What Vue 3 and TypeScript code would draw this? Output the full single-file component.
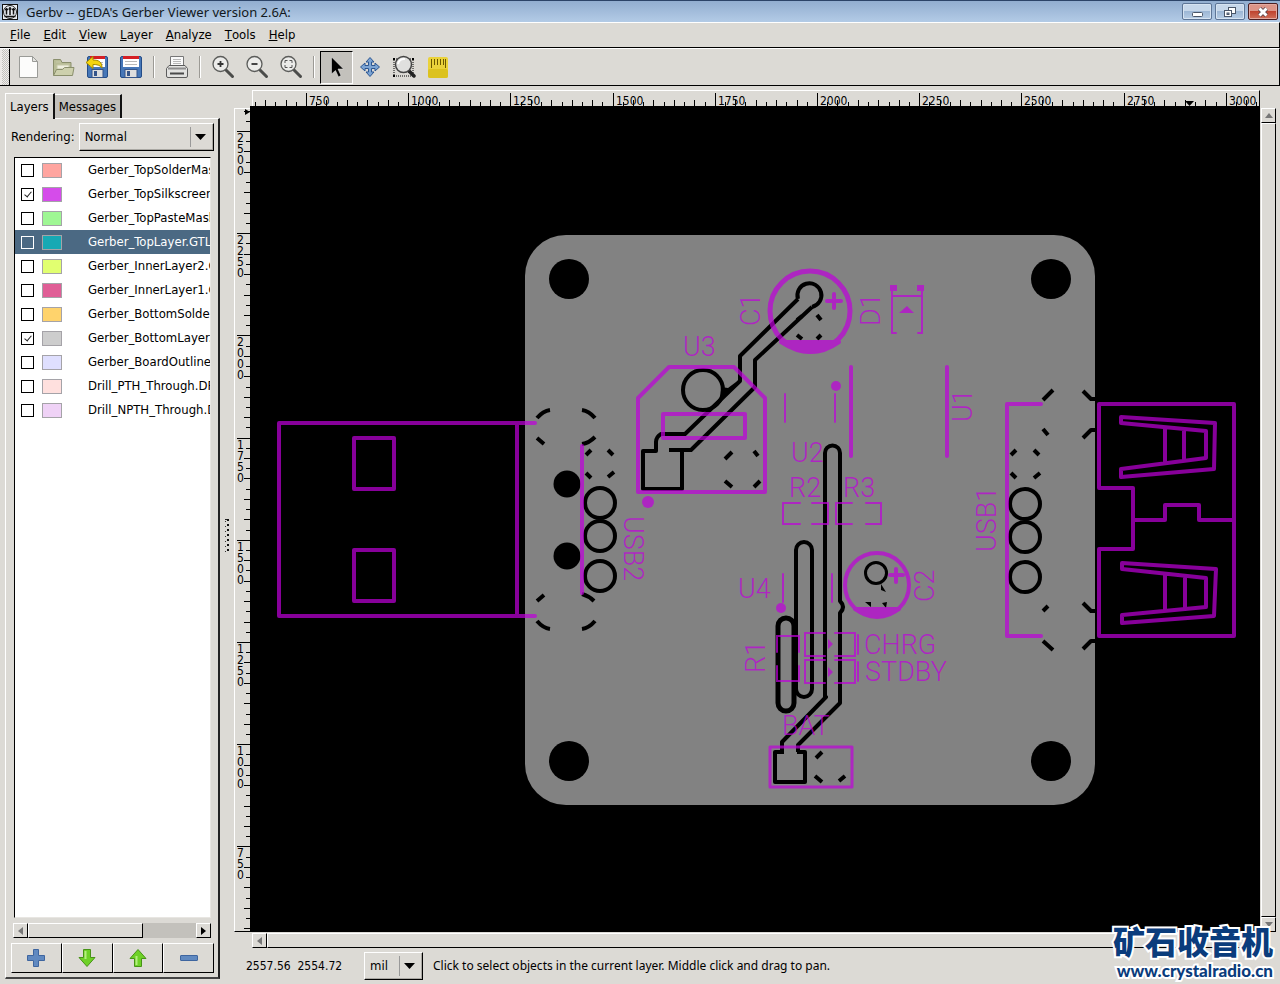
<script setup lang="ts">
import { reactive, ref } from 'vue'

interface Layer {
  name: string
  color: string
  visible: boolean
}

interface Tick {
  pos: number
  size: number
  label: string
}

interface SilkLabel {
  text: string
  x: number
  y: number
  angle: number
}

const menus = ['File', 'Edit', 'View', 'Layer', 'Analyze', 'Tools', 'Help']

const layers = reactive<Layer[]>([
  { name: 'Gerber_TopSolderMaskLayer.GTS', color: '#ffa5a0', visible: false },
  { name: 'Gerber_TopSilkscreenLayer.GTO', color: '#d54cea', visible: true },
  { name: 'Gerber_TopPasteMaskLayer.GTP', color: '#9ff794', visible: false },
  { name: 'Gerber_TopLayer.GTL', color: '#17a9b4', visible: false },
  { name: 'Gerber_InnerLayer2.G2', color: '#e1ff70', visible: false },
  { name: 'Gerber_InnerLayer1.G1', color: '#e05e96', visible: false },
  { name: 'Gerber_BottomSolderMaskLayer.GBS', color: '#ffd36c', visible: false },
  { name: 'Gerber_BottomLayer.GBL', color: '#cdcdcd', visible: true },
  { name: 'Gerber_BoardOutlineLayer.GKO', color: '#dfdffe', visible: false },
  { name: 'Drill_PTH_Through.DRL', color: '#ffe0de', visible: false },
  { name: 'Drill_NPTH_Through.DRL', color: '#efd2f6', visible: false },
])
const selected = ref(3)
const rendering = ref('Normal')
const unit = ref('mil')

const PX_PER_MIL = 0.4088

function buildTicks(from: number, to: number, toPos: (v: number) => number): Tick[] {
  const ticks: Tick[] = []
  for (let v = from; v <= to; v += 25) {
    const major = v % 250 === 0
    ticks.push({
      pos: Math.round(toPos(v)),
      size: major ? 13 : v % 50 === 0 ? 6 : 4,
      label: major ? String(v) : '',
    })
  }
  return ticks
}

// Positions are relative to the rulers' own origins.
const hTicks = buildTicks(625, 3075, (v) => 53 + (v - 750) * PX_PER_MIL)
const vTicks = buildTicks(550, 2550, (v) => 22 + (2500 - v) * PX_PER_MIL)

const silkLabels: SilkLabel[] = [
  { text: 'U3', x: 683, y: 356, angle: 0 },
  { text: 'U2', x: 791, y: 462, angle: 0 },
  { text: 'R2', x: 789, y: 497, angle: 0 },
  { text: 'R3', x: 843, y: 497, angle: 0 },
  { text: 'U4', x: 738, y: 598, angle: 0 },
  { text: 'CHRG', x: 864, y: 654, angle: 0 },
  { text: 'STDBY', x: 865, y: 681, angle: 0 },
  { text: 'BAT', x: 782, y: 735, angle: 0 },
  { text: 'C1', x: 760, y: 326, angle: -90 },
  { text: 'D1', x: 880, y: 326, angle: -90 },
  { text: 'U1', x: 972, y: 422, angle: -90 },
  { text: 'C2', x: 934, y: 602, angle: -90 },
  { text: 'R1', x: 765, y: 673, angle: -90 },
  { text: 'USB1', x: 996, y: 552, angle: -90 },
  { text: 'USB2', x: 624, y: 516, angle: 90 },
]
</script>

<template>
  <div class="window">
    <header class="titlebar">
      <svg class="app-icon" width="16" height="16" viewBox="0 0 16 16">
        <rect x="0.5" y="0.5" width="15" height="15" fill="#e9edf2" stroke="#111" />
        <circle cx="8" cy="8" r="6.5" fill="none" stroke="#222" />
        <path d="M4.5 4v6.5M8 3v8M11.5 4v6.5M3 5.5h3M6.5 5h3M10 5.5h3M2.500 12.500h11" stroke="#111" stroke-width="1.500" fill="none" />
      </svg>
      <h1>Gerbv -- gEDA's Gerber Viewer version 2.6A:</h1>
      <div class="win-buttons">
        <button class="wb" aria-label="Minimize">
          <svg width="28" height="14" viewBox="0 0 28 14"><rect x="9.500" y="7.500" width="10" height="4" rx="1" fill="#fff" stroke="#4a5668" /></svg>
        </button>
        <button class="wb" aria-label="Restore">
          <svg width="28" height="14" viewBox="0 0 28 14">
            <rect x="12.500" y="2.500" width="7" height="6" fill="#fff" stroke="#4a5668" />
            <rect x="8.500" y="5.500" width="7" height="6" fill="#fff" stroke="#4a5668" />
            <rect x="11" y="8" width="2" height="1.500" fill="#9db5d2" stroke="#4a5668" />
          </svg>
        </button>
        <button class="wb close" aria-label="Close">
          <svg width="28" height="14" viewBox="0 0 28 14">
            <path d="M10.500 3.500l7 7M17.500 3.500l-7 7" stroke="#53424a" stroke-width="4.500" />
            <path d="M10.500 3.500l7 7M17.500 3.500l-7 7" stroke="#fff" stroke-width="3" />
          </svg>
        </button>
      </div>
    </header>

    <nav class="menubar">
      <button v-for="m in menus" :key="m"><u>{{ m[0] }}</u>{{ m.slice(1) }}</button>
    </nav>

    <div class="toolbar">
      <div class="grip"></div>
      <button aria-label="New">
        <svg width="24" height="24" viewBox="0 0 24 24">
          <path d="M2.500 1.500h13l5 5v16h-18z" fill="#fcfcfb" stroke="#9a9b97" stroke-linejoin="round" />
          <path d="M15.500 1.500v5h5z" fill="#e4e4e1" stroke="#9a9b97" stroke-linejoin="round" />
        </svg>
      </button>
      <button aria-label="Open">
        <svg width="24" height="24" viewBox="0 0 24 24">
          <path d="M2.500 20.500V4.500h7l1.500 3h9v5" fill="#b9bd96" stroke="#8a8f6c" />
          <path d="M5 7h5M6 10h12v4H6z" fill="#eeeedd" stroke="#c5c8a8" />
          <path d="M2.500 20.500l3-6h6l2-2h9.500l-1.500 8z" fill="#cdd0ad" stroke="#8a8f6c" stroke-linejoin="round" />
        </svg>
      </button>
      <button aria-label="Revert">
        <svg width="24" height="24" viewBox="0 0 24 24">
          <rect x="2.500" y="1.500" width="20" height="21" rx="1.500" fill="#4677b8" stroke="#244c87" />
          <rect x="5" y="1" width="15" height="11" fill="#fff" /><rect x="5" y="1" width="15" height="3" fill="#d51f24" />
          <path d="M12 7.500h6M12 9.500h6" stroke="#b9b9b9" />
          <rect x="7" y="14.500" width="11" height="8" fill="#dedede" stroke="#35558a" /><rect x="9" y="16" width="3" height="5" fill="#35558a" />
          <path d="M1 7.500L8 1.500v3.500c6 0 9 2 9 8-2-3-5-3.500-9-3.500v4z" fill="#f5d50f" stroke="#a58a00" stroke-linejoin="round" />
        </svg>
      </button>
      <button aria-label="Save">
        <svg width="24" height="24" viewBox="0 0 24 24">
          <rect x="1.500" y="1.500" width="21" height="21" rx="1.500" fill="#4677b8" stroke="#244c87" />
          <rect x="4" y="1" width="16" height="11" fill="#fff" /><rect x="4" y="1" width="16" height="3" fill="#d51f24" />
          <path d="M6 6.500h12M6 9.500h12" stroke="#b9b9b9" />
          <rect x="6" y="14.500" width="12" height="8" fill="#dedede" stroke="#35558a" /><rect x="8" y="16" width="3" height="5" fill="#35558a" />
        </svg>
      </button>
      <i class="sep"></i>
      <button aria-label="Print">
        <svg width="24" height="24" viewBox="0 0 24 24">
          <path d="M5.500 11.500v-10h13v10" fill="#fafafa" stroke="#777" />
          <path d="M8 4.500h8M8 6.500h8M8 8.500h8" stroke="#b8b8b8" />
          <path d="M4 10.500h16l2.500 3v7.500q0 1.500-1.500 1.500H3q-1.500 0-1.500-1.500v-7.500z" fill="#e2e2e0" stroke="#5c5c5c" />
          <path d="M3 13.500h18" stroke="#8f8f8f" stroke-width="2" /><path d="M5 18.500h14" stroke="#4a4a4a" stroke-width="2" />
        </svg>
      </button>
      <i class="sep"></i>
      <button aria-label="Zoom in">
        <svg width="24" height="24" viewBox="0 0 24 24">
          <path d="M14.500 14.500l7 7" stroke="#4b4c4a" stroke-width="3" stroke-linecap="round" />
          <circle cx="9.500" cy="9" r="7.500" fill="#ececea" stroke="#5b5c5a" stroke-width="1.300" />
          <path d="M9.500 6v6M6.500 9h6" stroke="#333" stroke-width="1.800" />
        </svg>
      </button>
      <button aria-label="Zoom out">
        <svg width="24" height="24" viewBox="0 0 24 24">
          <path d="M14.500 14.500l7 7" stroke="#4b4c4a" stroke-width="3" stroke-linecap="round" />
          <circle cx="9.500" cy="9" r="7.500" fill="#ececea" stroke="#5b5c5a" stroke-width="1.300" />
          <path d="M6.500 9h6" stroke="#333" stroke-width="1.800" />
        </svg>
      </button>
      <button aria-label="Fit to window">
        <svg width="24" height="24" viewBox="0 0 24 24">
          <path d="M14.500 14.500l7 7" stroke="#4b4c4a" stroke-width="3" stroke-linecap="round" />
          <circle cx="9.500" cy="9" r="7.500" fill="#ececea" stroke="#5b5c5a" stroke-width="1.300" />
          <path d="M6 8V5.500h2.500M10.500 5.500H13V8M13 10v2.500h-2.500M8.500 12.500H6V10" fill="none" stroke="#555" />
        </svg>
      </button>
      <i class="sep"></i>
      <button class="active" aria-label="Pointer">
        <svg width="24" height="24" viewBox="0 0 24 24"><path d="M6.500 2v17l4-3.500 3 6.500 2.500-1.500-3-6.500h5.500z" fill="#000" stroke="#eee" stroke-width="0.500" /></svg>
      </button>
      <button aria-label="Pan">
        <svg width="24" height="24" viewBox="0 0 24 24">
          <path d="M12 2.500l4 4.500h-2.500v3.500H17V8l4.500 4-4.500 4v-2.500h-3.500V17H16l-4 4.500L8 17h2.500v-3.500H7V16l-4.500-4L7 8v2.500h3.500V7H8z" fill="#7ba4d4" stroke="#2b5591" stroke-linejoin="round" />
        </svg>
      </button>
      <button aria-label="Zoom">
        <svg width="24" height="24" viewBox="0 0 24 24">
          <rect x="2" y="4" width="19" height="17" fill="none" stroke="#000" stroke-dasharray="1 1" />
          <path d="M1 3h2v2H1zM20 3h2v2h-2zM1 20h2v2H1z" />
          <path d="M17 16l5 5" stroke="#222" stroke-width="3.500" stroke-linecap="round" />
          <circle cx="11.500" cy="9.500" r="8" fill="#e0e0de" stroke="#444" stroke-width="1.500" />
          <path d="M6 9a6 6 0 0 1 7-5" fill="none" stroke="#fff" stroke-width="2" />
        </svg>
      </button>
      <button aria-label="Measure">
        <svg width="24" height="24" viewBox="0 0 24 24">
          <rect x="2" y="2" width="20" height="21" rx="2" fill="#ead23a" /><rect x="2" y="14" width="20" height="9" rx="2" fill="#dcc21e" />
          <path d="M5.500 4v9M8.500 4v6M11.500 4v6M14.500 4v6M17.500 4v6M19.500 4v9" stroke="#6b5800" />
        </svg>
      </button>
    </div>

    <main class="main">
      <aside class="side">
        <div class="tabs">
          <button class="tab on">Layers</button>
          <button class="tab">Messages</button>
        </div>
        <div class="page">
          <div class="render-row">
            <label for="rendering">Rendering:</label>
            <div class="combo grow">
              <select id="rendering" v-model="rendering">
                <option>Normal</option>
                <option>Fast</option>
              </select>
              <svg width="11" height="6" viewBox="0 0 11 6"><path d="M0 0h11L5.500 6z" /></svg>
            </div>
          </div>
          <ul class="layers">
            <li v-for="(l, i) in layers" :key="l.name" :class="{ sel: i === selected }" @click="selected = i">
              <input :id="`layer-${i}`" v-model="l.visible" type="checkbox" />
              <span class="swatch" :style="{ background: l.color }"></span>
              <label :for="`layer-${i}`">{{ l.name }}</label>
            </li>
          </ul>
          <div class="hscroll list-scroll">
            <button aria-label="Scroll left"><svg width="5" height="8" viewBox="0 0 5 8"><path d="M5 0v8L0 4z" fill="#777" /></svg></button>
            <div class="thumb part"></div>
            <span class="rest"></span>
            <button aria-label="Scroll right"><svg width="5" height="8" viewBox="0 0 5 8"><path d="M0 0v8l5-4z" /></svg></button>
          </div>
          <div class="layer-buttons">
            <button aria-label="Add layer">
              <svg width="20" height="20" viewBox="0 0 20 20"><path d="M7.500 1.500h5v6h6v5h-6v6h-5v-6h-6v-5h6z" fill="#6089c0" stroke="#3e659f" /></svg>
            </button>
            <button aria-label="Move layer down">
              <svg width="20" height="20" viewBox="0 0 20 20"><path d="M6.500 1.500h7v8h4.500l-8 9-8-9h4.500z" fill="#6ed127" stroke="#479316" stroke-linejoin="round" /><path d="M8.500 3v8" stroke="#b4ef7e" stroke-width="2" /></svg>
            </button>
            <button aria-label="Move layer up">
              <svg width="20" height="20" viewBox="0 0 20 20"><path d="M6.500 18.500h7v-8h4.500l-8-9-8 9h4.500z" fill="#6ed127" stroke="#479316" stroke-linejoin="round" /><path d="M8.500 17v-9" stroke="#b4ef7e" stroke-width="2" /></svg>
            </button>
            <button aria-label="Remove layer">
              <svg width="20" height="20" viewBox="0 0 20 20"><rect x="1.500" y="7.500" width="17" height="5" rx="0.500" fill="#6089c0" stroke="#3e659f" /></svg>
            </button>
          </div>
        </div>
      </aside>

      <div class="splitter"><i></i></div>

      <section class="work">
        <svg class="hruler">
          <g shape-rendering="crispEdges">
            <rect v-for="t in hTicks" :key="t.pos" :x="t.pos" :y="15 - t.size" width="1" :height="t.size" />
          </g>
          <text v-for="t in hTicks.filter((k) => k.label)" :key="t.label" :x="t.pos + 3" y="14">{{ t.label }}</text>
          <path d="M932 10h9l-4.500 5z" />
        </svg>
        <svg class="vruler">
          <g shape-rendering="crispEdges">
            <rect v-for="t in vTicks" :key="t.pos" :x="15 - t.size" :y="t.pos" :width="t.size" height="1" />
          </g>
          <template v-for="t in vTicks.filter((k) => k.label)" :key="t.label">
            <text v-for="(d, i) in t.label.split('')" :key="i" x="2" :y="t.pos + 11 + i * 11">{{ d }}</text>
          </template>
          <path d="M10 0v6l5-3z" />
        </svg>

        <div class="canvas">
          <svg width="100%" height="100%">
            <g transform="translate(-250 -106)">
              <rect x="525" y="235" width="570" height="570" rx="41" fill="#828282" />

              <g>
                <circle cx="569" cy="279" r="20" /><circle cx="1051" cy="279" r="20" />
                <circle cx="569" cy="761" r="20" /><circle cx="1051" cy="761" r="20" />
                <circle cx="567" cy="484" r="13.500" /><circle cx="567" cy="556" r="13.500" />
                <path d="M721 387l7 1 8-6-16 20zM881 584l5 8-5-2zM865 602h6v5zM882 603l5-1-1 6z" />
              </g>

              <g fill="none" stroke="#000" stroke-width="4" stroke-linejoin="round">
                <path d="M798 299L740 356v25L685 434h-24q-5 3-5 8v9h-13v38h39v-38" />
                <path d="M669 450h22L755 387v-27L812 307" />
                <path d="M798 299A12 12 0 1 1 812 307" />
                <circle cx="703" cy="390" r="20" />
                <path d="M784 752h-9v30h30v-30h-8M782 752v-10L826 697h-1V453a7.500 7.500 0 0 1 15 0v148q6 6 0 12v90L798 745v7" />
                <rect x="796" y="542" width="16" height="155" rx="8" />
                <rect x="778" y="618" width="16" height="93" rx="8" stroke-width="5" />
                <circle cx="876" cy="573" r="10.500" stroke-width="3" />
                <g>
                  <circle v-for="y in [503, 536, 576]" :key="y" cx="600" :cy="y" r="15" />
                  <circle v-for="y in [504, 537, 577]" :key="y" cx="1025" :cy="y" r="15" />
                  <path d="M797 320l5-4M817 315l4 5M797 335l5 4M821 335l-4 4" />
                  <path d="M725 459l7-7M754 451l4 5M725 481l7 6M760 481l-6 6" />
                  <path d="M816 758l6-6M815 776l7 6M845 776l-6 5" />
                  <path d="M586 455l5-5M608 450l5 5M586 473l5 5M614 472l-6 5" />
                  <path d="M1011 455l5-5M1034 450l5 5M1011 473l5 5M1040 473l-6 5" />
                  <path d="M537 418q6-7 13-8M582 410q7 1 13 8M537 438l7 6M582 444q7-1 13-7" />
                  <path d="M537 601l7-6M582 594q7 2 12 7M537 621q6 7 13 8M582 629q7-1 13-8" />
                  <path d="M1043 400l10-10M1083 391l8 8h4M1043 429l5 6M1083 438l8-8h4" />
                  <path d="M1043 611l5-5M1083 603l8 8h4M1043 641l10 9M1083 649l8-8h4" />
                </g>
              </g>

              <g opacity="0.700" fill="none" stroke="#c000dc" stroke-width="4" stroke-linecap="round" stroke-linejoin="round">
                <path d="M535 423H279v193h256M517 423v193M582 446v147" />
                <rect x="354" y="438" width="40" height="51" /><rect x="354" y="550" width="40" height="51" />
                <path d="M638 398L669 367h65L765 398v94H638z" />
                <rect x="663" y="414" width="82" height="24" />
                <circle cx="810" cy="311" r="40" stroke-width="5" /><path d="M781 342h58q-28 20-58 0z" fill="#c000dc" />
                <path d="M834 294v14M827 301h14M896 569v13M890 575h13" />
                <circle cx="877" cy="585" r="32" /><path d="M855 609h44q-22 14-44 0z" fill="#c000dc" />
                <path d="M851 367v89M947 367v89" />
                <path d="M1041 404h-34v232h34" />
                <path d="M1099 404h135v232h-135v-87h34v-61h-34zM1134 520h31v-15h34v15h35" />
                <path d="M1121 417L1215 423 1214 469 1121 477V469L1206 458V431L1121 423zM1165 428v35M1184 429v32" />
                <path d="M1122 563L1216 569 1214 616 1122 623V615L1206 607V578L1122 569zM1165 575v35M1185 577v32" />
                <rect x="770" y="747" width="82" height="40" stroke-width="3" />
                <g stroke-width="2" stroke-linejoin="miter">
                  <path d="M785 394v28M835 394v28M783 574v28M832 574v28" />
                  <path d="M896 333h-4v-47M918 333h4v-47M892 296h30" />
                  <path d="M800 503h-17v21h17M812 503h16v21h-16M852 503h-16v21h16M866 503h15v21h-15" />
                  <path d="M777 652v-16h22v16M777 666v15h22v-15" />
                  <path d="M825 633h-20v23h20M835 633h20v23h-20M858 635v19M825 660h-20v23h20M835 660h20v23h-20M858 662v19" />
                </g>
                <g fill="#c000dc" stroke="none">
                  <circle cx="648" cy="502" r="6" /><circle cx="836" cy="386" r="5" /><circle cx="781" cy="608" r="5" />
                  <path d="M890 285h7v6h-7zM917 285h7v6h-7zM907 306l7 7h-15zM828 639l5 5-5 5zM828 667l5 5-5 5z" />
                  <text
                    v-for="s in silkLabels"
                    :key="s.text"
                    class="silk"
                    :transform="`translate(${s.x} ${s.y}) rotate(${s.angle})`"
                  >{{ s.text }}</text>
                </g>
              </g>
            </g>
          </svg>
        </div>

        <div class="vscroll">
          <button aria-label="Scroll up"><svg width="8" height="5" viewBox="0 0 8 5"><path d="M0 5h8L4 0z" fill="#777" /></svg></button>
          <div class="thumb"></div>
          <button aria-label="Scroll down"><svg width="8" height="5" viewBox="0 0 8 5"><path d="M0 0h8L4 5z" fill="#777" /></svg></button>
        </div>
        <div class="hscroll view-scroll">
          <button aria-label="Scroll left"><svg width="5" height="8" viewBox="0 0 5 8"><path d="M5 0v8L0 4z" fill="#777" /></svg></button>
          <div class="thumb"></div>
          <button aria-label="Scroll right"><svg width="5" height="8" viewBox="0 0 5 8"><path d="M0 0v8l5-4z" /></svg></button>
        </div>

        <footer class="status">
          <output>2557.56&nbsp; 2554.72</output>
          <div class="combo unit">
            <select v-model="unit" aria-label="Units">
              <option>mil</option>
              <option>mm</option>
              <option>in</option>
            </select>
            <svg width="11" height="6" viewBox="0 0 11 6"><path d="M0 0h11L5.500 6z" /></svg>
          </div>
          <p>Click to select objects in the current layer. Middle click and drag to pan.</p>
        </footer>
      </section>
    </main>

    <div class="watermark">
      <strong>矿石收音机</strong>
      <span>www.crystalradio.cn</span>
    </div>
  </div>
</template>

<style>
body {
  background: #dcdad5;
}
</style>

<style scoped>
* {
  box-sizing: border-box;
}
.window {
  position: relative;
  display: flex;
  flex-direction: column;
  height: 100vh;
  overflow: hidden;
  background: #dcdad5;
  color: #000;
  font: 13px/16px "DejaVu Sans Condensed", "Noto Sans", sans-serif;
}
button {
  display: flex;
  align-items: center;
  justify-content: center;
  margin: 0;
  padding: 0;
  border: 0;
  background: none;
  color: inherit;
  font: inherit;
}
.titlebar {
  display: flex;
  align-items: center;
  flex: none;
  height: 22px;
  padding: 0 2px;
  border-top: 1px solid #2c4468;
  background: linear-gradient(#92aed0, #b3cbe6);
}
.titlebar h1 {
  flex: 1;
  margin: 0 0 0 8px;
  font: 13px/20px "Noto Sans", sans-serif;
  color: #111820;
}
.win-buttons {
  display: flex;
  gap: 3px;
}
.wb {
  width: 30px;
  height: 17px;
  border: 1px solid #5d7596;
  border-radius: 2px;
  background: linear-gradient(#c6d7ea 45%, #9db7d5 50%, #b7cde5);
  box-shadow: inset 0 0 0 1px #d6e3f1;
}
.wb.close {
  border-color: #4b1f22;
  background: linear-gradient(#dc9588 45%, #bf4430 50%, #d0705a);
  box-shadow: inset 0 0 0 1px #e3aaa0;
}
.menubar {
  display: flex;
  flex: none;
  height: 26px;
  padding-left: 10px;
  gap: 13px;
  border-top: 1px solid #fff;
  border-right: 1px solid #000;
  border-bottom: 1px solid #000;
}
.toolbar {
  display: flex;
  align-items: center;
  flex: none;
  height: 38px;
  border-top: 1px solid #fff;
  border-right: 1px solid #000;
  border-bottom: 1px solid #000;
}
.toolbar button {
  width: 34px;
  height: 33px;
}
.toolbar .active {
  width: 33px;
  border-top: 1px solid #000;
  border-left: 1px solid #000;
  border-right: 1px solid #fff;
  border-bottom: 1px solid #fff;
  background: #c3c1bc;
}
.grip {
  align-self: stretch;
  width: 10px;
  margin-right: 2px;
  border-left: 2px solid #eceae7;
  border-right: 1px solid #000;
  background: repeating-conic-gradient(#c2c0bb 0 25%, #efeeec 0 50%) 0 0 / 2px 2px;
}
.sep {
  width: 2px;
  height: 22px;
  margin: 0 5px;
  border-left: 1px solid #9c9a95;
  border-right: 1px solid #fff;
}
.main {
  display: flex;
  flex: 1;
  min-height: 0;
}
.side {
  display: flex;
  flex-direction: column;
  width: 215px;
  margin: 6px 0 5px 5px;
}
.tabs {
  display: flex;
  align-items: flex-end;
  height: 26px;
}
.tab {
  height: 24px;
  padding: 0 4px;
  border-top: 1px solid #fff;
  border-right: 2px solid #111;
  background: #c3c1bc;
}
.tab.on {
  z-index: 1;
  height: 26px;
  margin-bottom: -1px;
  border-left: 1px solid #fff;
  background: #dcdad5;
}
.page {
  display: flex;
  flex: 1;
  flex-direction: column;
  min-height: 0;
  padding: 4px 4px 4px 5px;
  border: 1px solid #fff;
  border-right: 2px solid #222;
  border-bottom: 2px solid #444;
}
.render-row {
  display: flex;
  align-items: center;
  gap: 4px;
}
.combo {
  position: relative;
  height: 28px;
  border: 1px solid #fff;
  border-right-color: #000;
  border-bottom-color: #000;
  box-shadow: inset -1px -1px #aaa8a3;
}
.grow {
  flex: 1;
}
.combo select {
  width: 100%;
  height: 100%;
  padding: 0 5px;
  border: 0;
  outline: 0;
  appearance: none;
  background: linear-gradient(#999, #999) right 22px center / 1px 20px no-repeat;
  color: inherit;
  font: inherit;
}
.combo svg {
  position: absolute;
  top: 10px;
  right: 7px;
  pointer-events: none;
}
.layers {
  flex: 1;
  margin: 6px 3px 0;
  padding: 0;
  overflow: hidden;
  border: 1px solid #e8e6e2;
  border-top-color: #000;
  border-left-color: #000;
  background: #fff;
  list-style: none;
}
.layers li {
  display: flex;
  align-items: center;
  height: 24px;
  padding-left: 6px;
  white-space: nowrap;
}
.layers li.sel {
  background: #4b6983;
  color: #fff;
}
.layers label {
  flex: 1;
  min-width: 0;
  overflow: hidden;
}
.layers input {
  position: relative;
  flex: none;
  width: 13px;
  height: 13px;
  margin: 0 8px 0 0;
  border: 1px solid currentColor;
  color: inherit;
  appearance: none;
}
.layers input:checked::after {
  content: "";
  position: absolute;
  top: 1px;
  left: 4px;
  width: 3px;
  height: 6px;
  border: solid #222;
  border-width: 0 1px 1px 0;
  transform: rotate(40deg);
}
.swatch {
  flex: none;
  width: 20px;
  height: 15px;
  margin-right: 26px;
  border: 1px solid #a5a3a8;
}
.hscroll,
.vscroll {
  display: flex;
  background: #c3c1bc;
}
.hscroll {
  height: 15px;
}
.vscroll {
  flex-direction: column;
}
.hscroll button,
.vscroll button,
.thumb {
  flex: none;
  width: 15px;
  height: 15px;
  border: 1px solid #fff;
  border-right-color: #000;
  border-bottom-color: #000;
  background: #dcdad5;
}
.thumb {
  flex: 1;
}
.hscroll .thumb {
  width: auto;
}
.vscroll .thumb {
  height: auto;
}
.thumb.part {
  flex: 115;
}
.rest {
  flex: 54;
}
.list-scroll {
  margin: 5px 3px 0 2px;
}
.layer-buttons {
  display: grid;
  grid-template-columns: repeat(4, 1fr);
  margin-top: 5px;
}
.layer-buttons button {
  height: 30px;
  border: 1px solid #fff;
  border-right-color: #000;
  border-bottom-color: #000;
}
.splitter {
  display: flex;
  align-items: center;
  justify-content: center;
  width: 14px;
}
.splitter i {
  width: 4px;
  height: 33px;
  background:
    linear-gradient(#222, #222) 0 0 / 2px 1px no-repeat,
    repeating-linear-gradient(#111 0 2px, transparent 2px 5px) 2px 0 / 2px 100% no-repeat,
    repeating-linear-gradient(transparent 0 2px, #333 2px 3px, transparent 3px 5px) 0 0 / 1px 100% no-repeat;
}
.work {
  display: grid;
  flex: 1;
  grid-template-columns: 16px minmax(0, 1fr) 15px;
  grid-template-rows: 16px minmax(0, 1fr) 15px 37px;
  column-gap: 0;
  min-width: 0;
  padding: 4px 4px 0 0;
}
.hruler text,
.vruler text {
  font-size: 12px;
}
.hruler {
  grid-column: 2;
  grid-row: 1;
  width: calc(100% - 3px);
  height: 16px;
  margin-left: 2px;
  border-top: 1px solid #fff;
  border-left: 1px solid #fff;
  border-right: 1px solid #000;
}
.vruler {
  grid-column: 1;
  grid-row: 2;
  width: 16px;
  height: calc(100% - 2px);
  margin-top: 2px;
  border-top: 1px solid #fff;
  border-left: 1px solid #fff;
  border-bottom: 1px solid #000;
}
.canvas {
  grid-column: 2;
  grid-row: 2;
  margin-right: 1px;
  overflow: hidden;
  background: #000;
}
.canvas svg {
  display: block;
}
.silk {
  font: 300 27px Roboto, sans-serif;
}
.vscroll {
  grid-column: 3;
  grid-row: 2;
  margin-top: 2px;
}
.view-scroll {
  grid-column: 2;
  grid-row: 3;
  margin: 1px 1px 0 2px;
}
.status {
  display: flex;
  align-items: center;
  grid-column: 1 / 4;
  grid-row: 4;
  padding-left: 12px;
}
.status output {
  width: 118px;
  font-size: 12px;
}
.status p {
  margin: 0 0 0 10px;
  font-family: "Noto Sans", sans-serif;
  font-size: 12px;
}
.unit {
  width: 59px;
}
.watermark {
  position: absolute;
  right: 7px;
  bottom: 4px;
  display: flex;
  flex-direction: column;
  align-items: flex-end;
  color: #0a3c7c;
  white-space: nowrap;
  paint-order: stroke fill;
  -webkit-text-stroke: 4px #fff;
}
.watermark strong {
  font: 900 32px/38px "Liberation Sans", "Noto Sans CJK SC", sans-serif;
}
.watermark span {
  font: 900 17px/18px Lato, sans-serif;
}
</style>
